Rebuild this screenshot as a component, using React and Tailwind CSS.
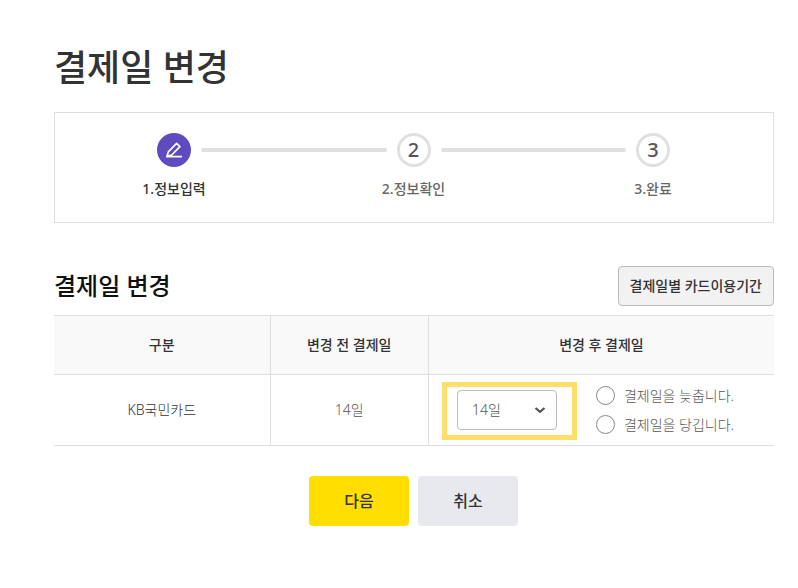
import { Fragment } from "react";

const steps = [
  { id: 1, label: "1.정보입력", current: true },
  { id: 2, label: "2.정보확인", current: false },
  { id: 3, label: "3.완료", current: false },
];

function PencilIcon() {
  return (
    <svg width="18" height="18" viewBox="0 0 18 18" fill="none" stroke="#fff" aria-hidden="true">
      <path d="M2 15.4 3.3 10.9 11.6 2.4 14.9 5.6 6.7 14 2 15.4Z" strokeWidth="1.7" strokeLinejoin="round" />
      <path d="M1.2 15.6H17" strokeWidth="1.7" />
    </svg>
  );
}

function Stepper() {
  return (
    <ol className="mt-5 flex items-start border border-[#dedede] pt-5 pr-[103px] pb-[23px] pl-[102px]">
      {steps.map((step, i) => (
        <Fragment key={step.id}>
          {i > 0 && <li aria-hidden="true" className="mx-2.5 mt-[15px] h-1 flex-1 rounded-full bg-[#e0e0e0]" />}
          <li aria-current={step.current ? "step" : undefined} className="flex w-[34px] flex-col items-center">
            {step.current ? (
              <span className="flex size-[34px] items-center justify-center rounded-full bg-[#5f4bbf]">
                <PencilIcon />
              </span>
            ) : (
              <span className="flex size-[34px] items-center justify-center rounded-full border-3 border-[#e0e0e0] text-xl leading-5 font-medium text-[#555]">
                {step.id}
              </span>
            )}
            <span className={`mt-3 text-sm leading-5 font-medium whitespace-nowrap ${step.current ? "text-[#333]" : "text-[#666]"}`}>
              {step.label}
            </span>
          </li>
        </Fragment>
      ))}
    </ol>
  );
}

function RadioOption({ id, label }) {
  return (
    <div className="flex items-center gap-[9px]">
      <input
        type="radio"
        id={id}
        name="direction"
        className="size-[19px] appearance-none rounded-full border border-[#888] bg-white checked:border-[6px] checked:border-[#5f4bbf]"
      />
      <label htmlFor={id} className="text-sm leading-5 whitespace-nowrap">
        {label}
      </label>
    </div>
  );
}

export default function App() {
  return (
    <main className="min-h-screen bg-white pt-11 pr-6 pb-10 pl-[54px] font-['Noto_Sans','Noto_Sans_CJK_KR',sans-serif] text-[#333]">
      <h1 className="text-4xl leading-12 font-medium">결제일 변경</h1>
      <Stepper />

      <div className="mt-[43px] flex items-center justify-between">
        <h2 className="text-2xl leading-8 font-medium text-[#111]">결제일 변경</h2>
        <button type="button" className="h-10 rounded border border-[#bbb] bg-[#f2f2f2] px-[11px] text-sm leading-5 font-medium">
          결제일별 카드이용기간
        </button>
      </div>

      <table className="mt-[9px] w-full table-fixed border-collapse border-y border-[#dedede] text-center text-sm leading-5">
        <thead>
          <tr className="h-[59px] border-b border-[#dedede] bg-[#f9f9f9]">
            <th scope="col" className="w-[30%] border-r border-[#dedede] font-medium">구분</th>
            <th scope="col" className="w-[22%] border-r border-[#dedede] font-medium">변경 전 결제일</th>
            <th scope="col" className="w-[48%] font-medium">변경 후 결제일</th>
          </tr>
        </thead>
        <tbody className="font-light text-[#555]">
          <tr className="h-[71px]">
            <td className="border-r border-[#dedede] text-[#333]">KB국민카드</td>
            <td className="border-r border-[#dedede]">14일</td>
            <td>
              <div className="flex items-center gap-[19px] pl-[13px]">
                <div className="mt-0.5 border-[5px] border-[#ffdf6b] pt-[3px] pr-[15px] pb-[5px] pl-2.5">
                  <div className="grid items-center">
                    <select
                      aria-label="변경 후 결제일"
                      defaultValue="14"
                      className="col-start-1 row-start-1 h-10 w-[100px] appearance-none rounded border border-[#bbb] bg-white pl-3.5 text-sm leading-5"
                    >
                      <option value="1">1일</option>
                      <option value="14">14일</option>
                      <option value="25">25일</option>
                    </select>
                    <svg
                      width="12"
                      height="8"
                      viewBox="0 0 12 8"
                      fill="none"
                      stroke="#555"
                      strokeWidth="2.2"
                      aria-hidden="true"
                      className="pointer-events-none col-start-1 row-start-1 mr-[11px] justify-self-end"
                    >
                      <path d="m1.5 2 4.5 3.8 4.5-3.8" />
                    </svg>
                  </div>
                </div>
                <div className="flex flex-col gap-[9px]">
                  <RadioOption id="later" label="결제일을 늦춥니다." />
                  <RadioOption id="earlier" label="결제일을 당깁니다." />
                </div>
              </div>
            </td>
          </tr>
        </tbody>
      </table>

      <div className="mt-[30px] flex justify-center gap-[9px] pr-px">
        <button type="button" className="h-[50px] w-[100px] rounded bg-[#ffde00] text-base leading-6 font-medium">
          다음
        </button>
        <button type="button" className="h-[50px] w-[100px] rounded bg-[#e8e9ef] text-base leading-6 font-medium">
          취소
        </button>
      </div>
    </main>
  );
}
